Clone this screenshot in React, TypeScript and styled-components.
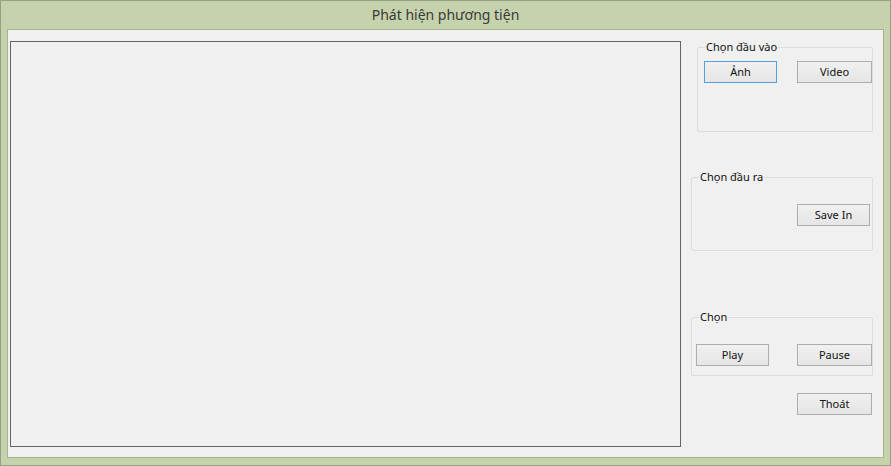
import React from "react";
import styled, { createGlobalStyle } from "styled-components";

const Global = createGlobalStyle`
  html, body { margin: 0; padding: 0; background: #c6d2ac; }
  * { box-sizing: border-box; }
`;

const Window = styled.div`
  width: 891px;
  height: 466px;
  border: 1px solid #94a37d;
  background: #c6d2ac;
  display: flex;
  flex-direction: column;
  padding: 0 6px 7px 6px;
  font-family: "Noto Sans", "Open Sans", sans-serif;
`;

const TitleBar = styled.div`
  height: 28px;
  display: flex;
  align-items: center;
  justify-content: center;
  font-size: 14px;
  color: #3a3a3a;
  padding-bottom: 2px;
`;

const Client = styled.div`
  flex: 1;
  border: 1px solid #a6b58f;
  background: #f0f0f0;
  display: flex;
  padding: 11px 0 0 2px;
`;

const PictureBox = styled.div`
  width: 671px;
  height: 406px;
  border: 1px solid #646464;
  background: #f0f0f0;
  flex-shrink: 0;
`;

const SidePanel = styled.div`
  margin-left: 10px;
  width: 182px;
  display: flex;
  flex-direction: column;
`;

const Group = styled.div<{ $top: number; $left: number; $height: number; $pt: number; $pl: number; $pr: number; $justify: string }>`
  position: relative;
  margin-top: ${(p) => p.$top}px;
  margin-left: ${(p) => p.$left}px;
  height: ${(p) => p.$height}px;
  border: 1px solid #dcdcdc;
  border-radius: 2px;
  display: flex;
  align-items: flex-start;
  justify-content: ${(p) => p.$justify};
  padding: ${(p) => p.$pt}px ${(p) => p.$pr}px 0 ${(p) => p.$pl}px;
`;

const Legend = styled.span<{ $left: number }>`
  position: absolute;
  top: -9px;
  left: ${(p) => p.$left}px;
  padding: 0 1px;
  background: #f0f0f0;
  font-size: 11px;
  line-height: 16px;
  color: #111;
`;

const Button = styled.button<{ $w: number; $focus?: boolean }>`
  width: ${(p) => p.$w}px;
  height: 22px;
  border: 1px solid ${(p) => (p.$focus ? "#4ea2e8" : "#adadad")};
  background: linear-gradient(#f0f0f0, #e5e5e5);
  font-family: "Noto Sans", "Open Sans", sans-serif;
  font-size: 11px;
  color: #111;
  padding: 0;
  margin: 0;
  line-height: 20px;
  flex-shrink: 0;
`;

const ExitButton = styled(Button)`
  align-self: flex-end;
  margin-top: 17px;
  margin-right: 1px;
`;

export default function App() {
  return (
    <>
      <Global />
      <Window>
        <TitleBar>Phát hiện phương tiện</TitleBar>
        <Client>
          <PictureBox />
          <SidePanel>
            <Group $top={6} $left={6} $height={85} $pt={13} $pl={6} $pr={0} $justify="space-between">
              <Legend $left={7}>Chọn đầu vào</Legend>
              <Button $w={73} $focus>Ảnh</Button>
              <Button $w={75}>Video</Button>
            </Group>
            <Group $top={45} $left={0} $height={74} $pt={26} $pl={0} $pr={2} $justify="flex-end">
              <Legend $left={7}>Chọn đầu ra</Legend>
              <Button $w={73}>Save In</Button>
            </Group>
            <Group $top={66} $left={0} $height={59} $pt={26} $pl={4} $pr={0} $justify="space-between">
              <Legend $left={7}>Chọn</Legend>
              <Button $w={73}>Play</Button>
              <Button $w={75}>Pause</Button>
            </Group>
            <ExitButton $w={75}>Thoát</ExitButton>
          </SidePanel>
        </Client>
      </Window>
    </>
  );
}
